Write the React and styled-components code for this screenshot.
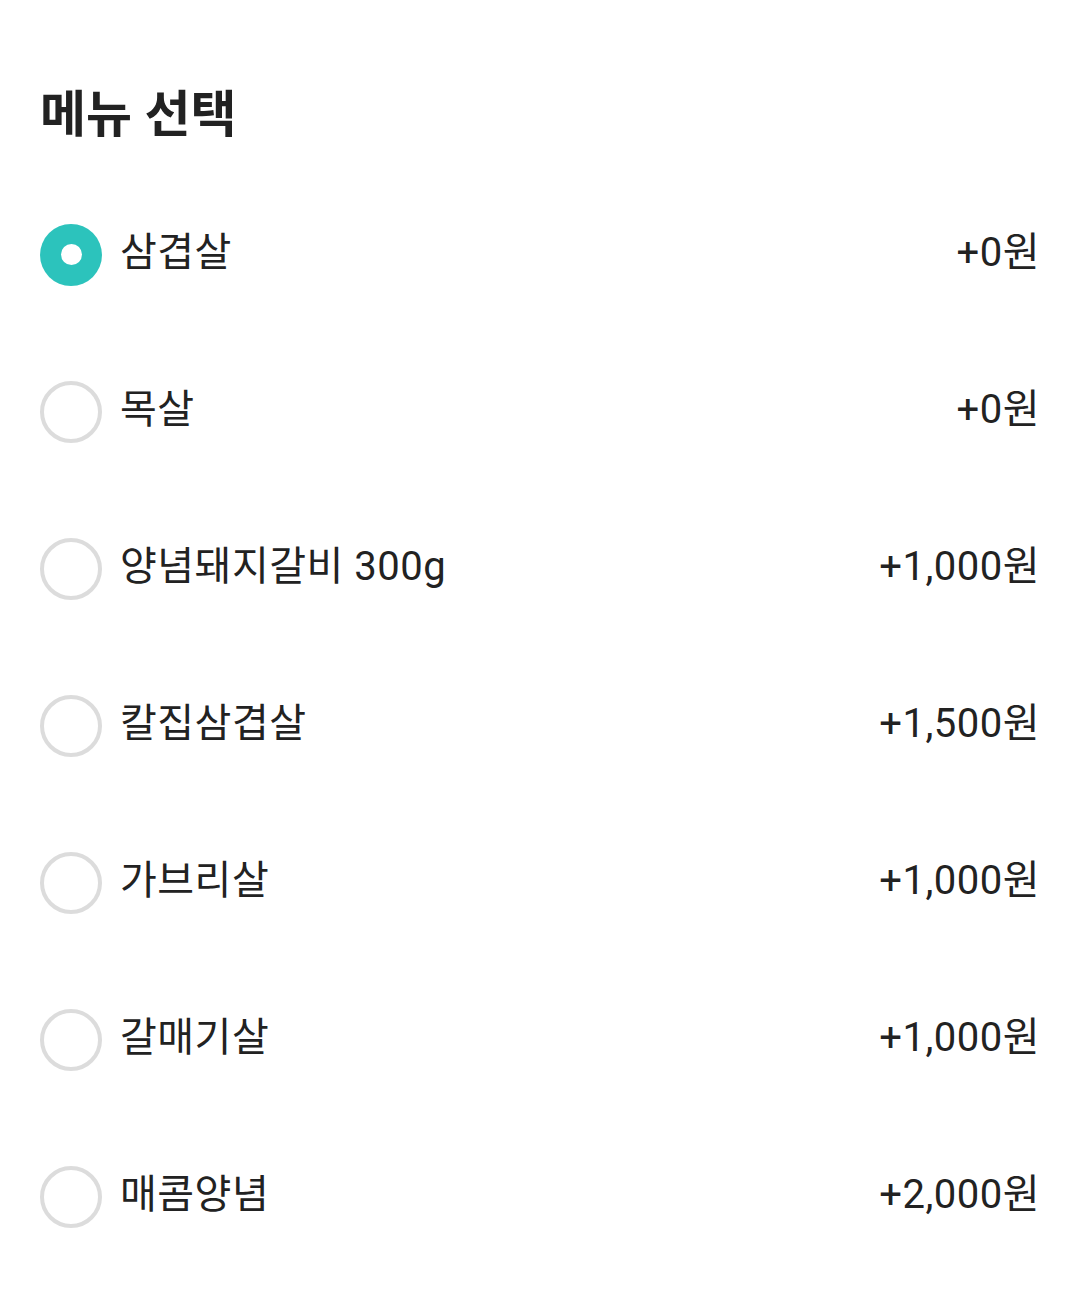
import React, { useState } from "react";
import styled, { createGlobalStyle } from "styled-components";

const GlobalStyle = createGlobalStyle`
    body {
        margin: 0;
        background: #ffffff;
        font-family: Roboto, "Noto Sans CJK KR", sans-serif;
        color: #222222;
    }
`;

const Container = styled.div`
    padding: 0 40px;
`;

const Header = styled.div`
    height: 176px;
    padding-top: 85px;
    box-sizing: border-box;
`;

const Title = styled.h2`
    margin: 0;
    font-size: 50px;
    line-height: 60px;
    font-weight: 700;
    color: #222222;
`;

const List = styled.div`
    display: flex;
    flex-direction: column;
`;

const Row = styled.label`
    height: 157px;
    display: flex;
    align-items: center;
    cursor: pointer;
`;

const Radio = styled.span`
    width: 62px;
    height: 62px;
    box-sizing: border-box;
    border-radius: 50%;
    flex-shrink: 0;
    display: flex;
    align-items: center;
    justify-content: center;
    background: ${(p) => (p.checked ? "#2cc3bc" : "#ffffff")};
    border: ${(p) => (p.checked ? "none" : "4px solid #dcdcdc")};

    &::after {
        content: "";
        display: ${(p) => (p.checked ? "block" : "none")};
        width: 21px;
        height: 21px;
        border-radius: 50%;
        background: #ffffff;
    }
`;

const Name = styled.span`
    margin-left: 18px;
    flex: 1;
    font-size: 40px;
    line-height: 1;
    letter-spacing: 0.5px;
    padding-bottom: 3px;
`;

const Price = styled.span`
    font-size: 40px;
    line-height: 1;
    letter-spacing: 0.5px;
    padding-bottom: 3px;
`;

const menus = [
    { name: "삼겹살", price: "+0원" },
    { name: "목살", price: "+0원" },
    { name: "양념돼지갈비 300g", price: "+1,000원" },
    { name: "칼집삼겹살", price: "+1,500원" },
    { name: "가브리살", price: "+1,000원" },
    { name: "갈매기살", price: "+1,000원" },
    { name: "매콤양념", price: "+2,000원" },
];

export default function App() {
    const [selected, setSelected] = useState(0);
    return (
        <Container>
            <GlobalStyle />
            <Header>
                <Title>메뉴 선택</Title>
            </Header>
            <List>
                {menus.map((m, i) => (
                    <Row key={m.name} onClick={() => setSelected(i)}>
                        <Radio checked={selected === i} />
                        <Name>{m.name}</Name>
                        <Price>{m.price}</Price>
                    </Row>
                ))}
            </List>
        </Container>
    );
}
